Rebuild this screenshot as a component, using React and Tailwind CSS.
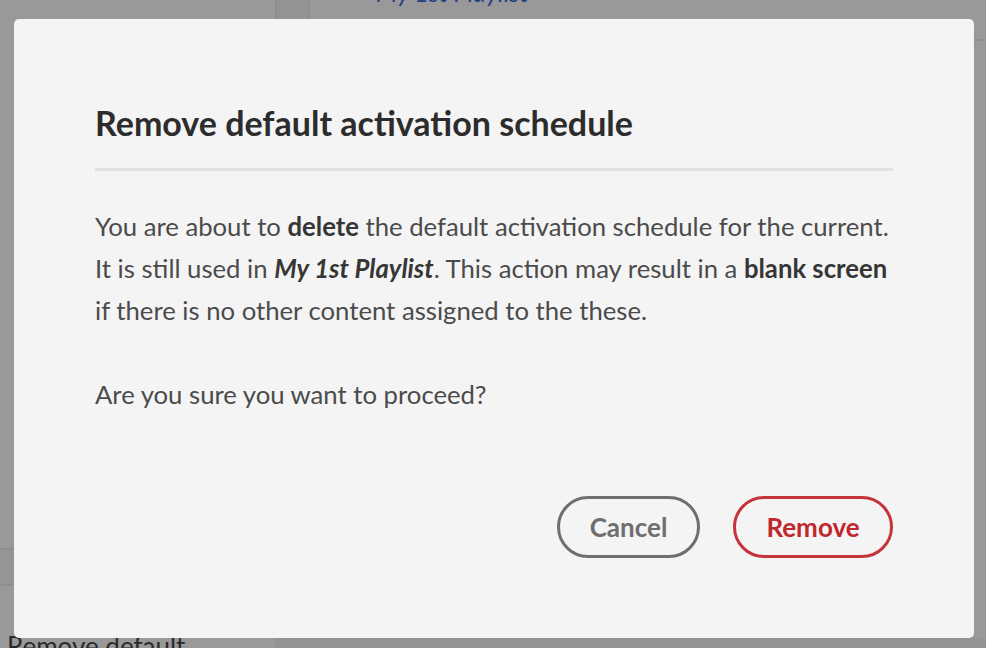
import React from 'react';

const font = { fontFamily: 'Lato, "Open Sans", sans-serif' };

const Background = () => (
  <div className="absolute inset-0 flex bg-[#999999]">
    <div className="relative w-[275px] shrink-0">
      <div className="mt-[548px] h-[38px] border-y-2 border-[#8e8e8e] bg-[#959595]" />
      <div className="absolute left-[7px] top-[627px] text-[26px] text-[#2a2a2a]">Remove default</div>
    </div>
    <div className="w-[35px] shrink-0 border-x-2 border-[#8e8e8e] bg-[#939393]" />
    <div className="relative flex-1">
      <div className="absolute left-[66px] top-[-26px] text-[25px] italic text-[#1f3f86]">My 1st Playlist</div>
      <div className="absolute right-0 top-[39px] h-[2px] w-[14px] bg-[#8e8e8e]" />
      <div className="absolute bottom-0 left-[-35px] right-0 h-[10px] bg-[#939393]" />
    </div>
  </div>
);

const ConfirmDialog = () => (
  <div className="absolute left-[14px] top-[19px] flex h-[619px] w-[960px] flex-col rounded-[5px] bg-[#f4f4f4] px-[81px] pt-[82px]">
    <h2 className="text-[34px] font-bold leading-[44px] text-[#2c2c2c]">Remove default activation schedule</h2>
    <div className="mt-[23px] h-[3px] bg-[#e1e1e1]" />
    <div className="mt-[34px] text-[25.7px] leading-[42px] text-[#4b4b4b]">
      <p className="whitespace-nowrap">
        You are about to <b className="text-[#363636]">delete</b> the default activation schedule for the current.
        <br />
        It is still used in <i className="font-bold text-[#363636]">My 1st Playlist</i>. This action may result in a{' '}
        <b className="text-[#363636]">blank screen</b>
        <br />
        if there is no other content assigned to the these.
      </p>
      <p className="mt-[42px]">Are you sure you want to proceed?</p>
    </div>
    <div className="mt-auto mb-[80px] flex justify-end gap-[33px]">
      <button className="h-[62px] w-[143px] rounded-full border-[3px] border-[#6e6e6e] text-[26px] font-bold text-[#6e6e6e]">
        Cancel
      </button>
      <button className="h-[62px] w-[160px] rounded-full border-[3px] border-[#c4343a] text-[26px] font-bold text-[#c0282e]">
        Remove
      </button>
    </div>
  </div>
);

export default function App() {
  return (
    <div className="relative h-[648px] w-[986px] overflow-hidden" style={font}>
      <Background />
      <ConfirmDialog />
    </div>
  );
}
